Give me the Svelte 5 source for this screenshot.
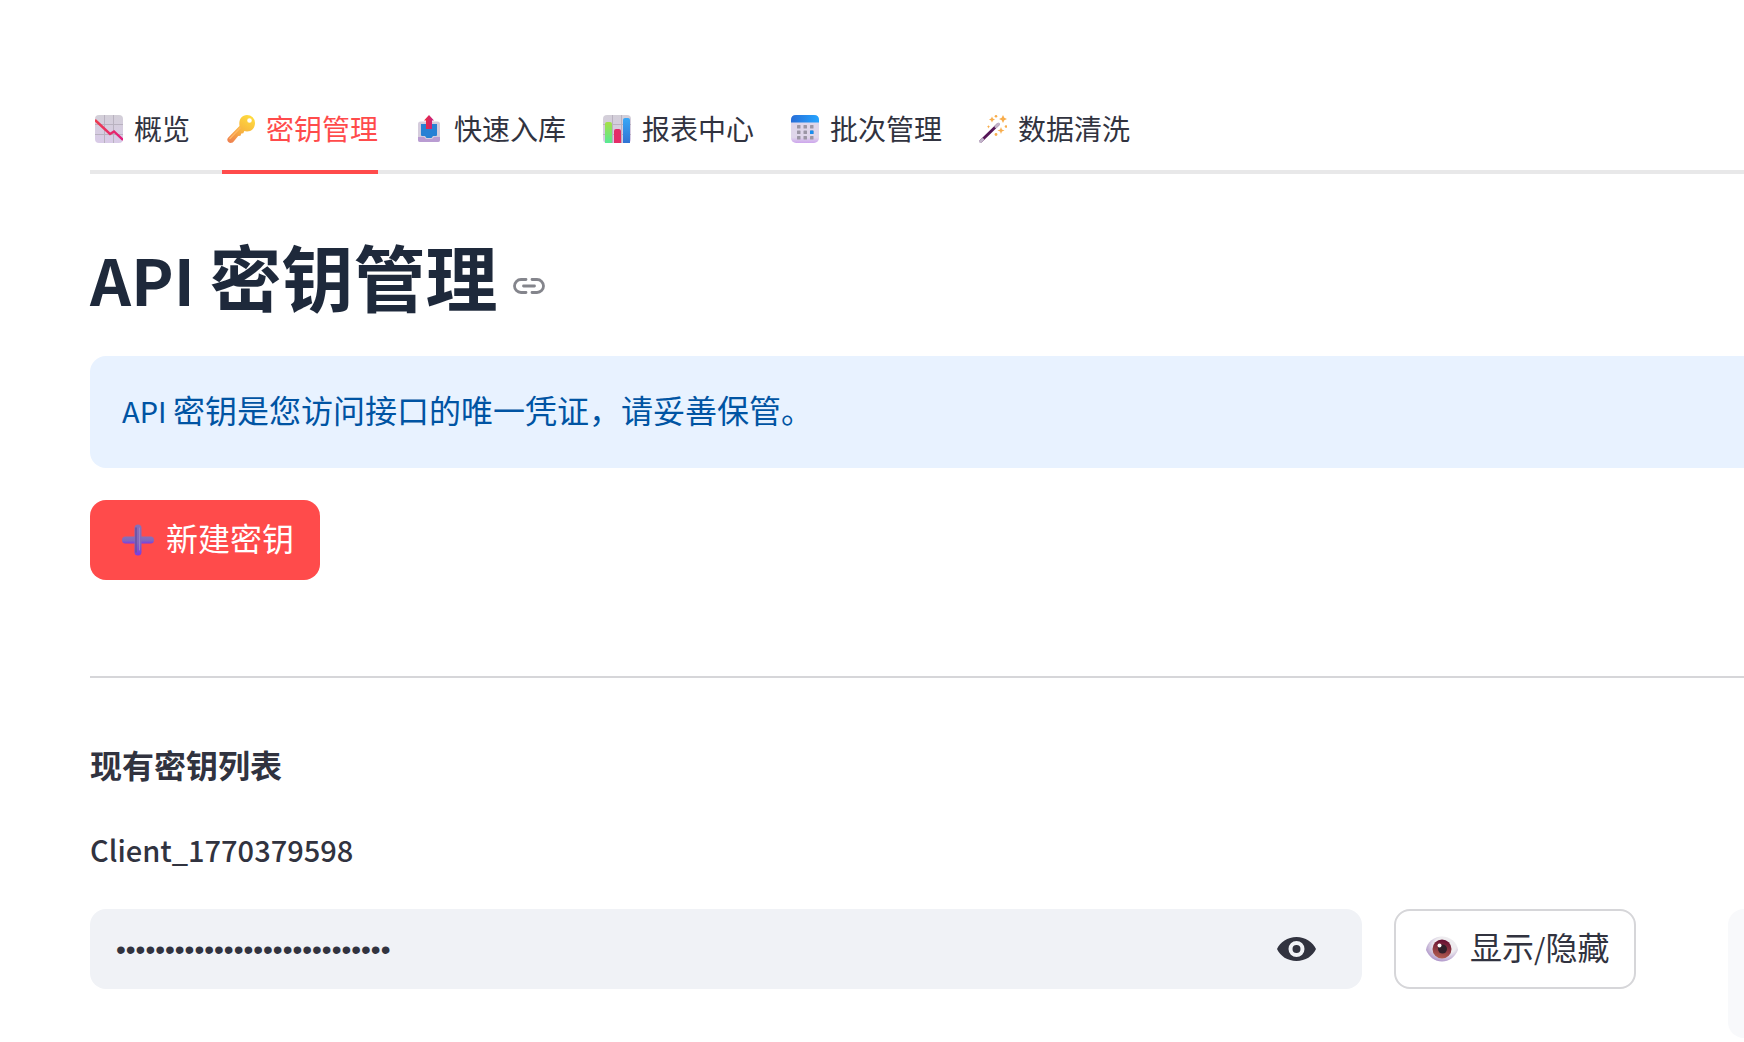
<script lang="ts">
	interface Tab {
		id: string;
		label: string;
	}

	const tabs: Tab[] = [
		{ id: 'overview', label: '概览' },
		{ id: 'keys', label: '密钥管理' },
		{ id: 'import', label: '快速入库' },
		{ id: 'reports', label: '报表中心' },
		{ id: 'batches', label: '批次管理' },
		{ id: 'cleaning', label: '数据清洗' }
	];

	let active = $state('keys');
	let visible = $state(false);
	let apiKey = $state('sk-4f9a2c7be81d4036a5d7c19e0');

	function toggleKey() {
		visible = !visible;
	}
</script>

{#snippet tabIcon(id: string)}
	<svg class="emoji" viewBox="0 0 28 28" aria-hidden="true">
		{#if id === 'overview'}
			<rect width="28" height="28" rx="4" fill="url(#paper)" />
			<path d="M9.5 0v28M18.5 0v28M0 9.5h28M0 19.5h28" stroke="#b9b2c0" stroke-width="1" />
			<path d="M0 5l15 14 4-2.5L28 25" fill="none" stroke="url(#trend)" stroke-width="2.4" />
		{:else if id === 'keys'}
			<path
				fill-rule="evenodd"
				fill="url(#gold)"
				d="M20 0a8 8 0 0 1 8 8c0 5-3.500 8.500-8 8.500-1 0-2-.2-2.700-.5l-1 2.200-2 .3-.8 2.300-2.300.2-4.700 5.800C4.500 29 0 28 .3 24.500c0-.8.400-1.400 1-2L12.500 11C11.500 5 14.500 0 20 0zM22.500 3.200a2.300 2.300 0 1 0 0 4.600 2.300 2.300 0 0 0 0-4.600z"
			/>
			<path d="M13 13L3 23.500" stroke="#ffb765" stroke-width="1.500" stroke-linecap="round" />
		{:else if id === 'import'}
			<rect x="3" y="6.500" width="22" height="20.500" rx="2.500" fill="#d5ccdc" />
			<path d="M3 22h6l2 2h6l2-2h6v3q0 2-2 2H5q-2 0-2-2z" fill="#b99cd2" />
			<path d="M6 9h16v11q0 1-1 1h-3l-1.500 2h-5L10 21H7q-1 0-1-1z" fill="#2781d4" />
			<path d="M14 0l5 5.500h-2V14h-6V5.500H9z" fill="url(#arrow)" />
		{:else if id === 'reports'}
			<rect width="28" height="28" rx="4" fill="url(#paper)" />
			<path d="M9.500 0v28M18.500 0v28M0 9.500h28M0 19.500h28" stroke="#b9b2c0" />
			<path d="M2 28V9q0-2 2-2h3q2 0 2 2v19z" fill="url(#green)" />
			<path d="M11 28V16q0-2 2-2h3q2 0 2 2v12z" fill="#e52d68" />
			<path d="M20 28V5q0-2 2-2h3q2 0 2 2v23z" fill="url(#blue)" />
		{:else if id === 'batches'}
			<rect width="28" height="28" rx="5" fill="url(#calendar)" />
			<path d="M0 7.500V5q0-5 5-5h18q5 0 5 5v2.500z" fill="url(#header)" />
			<g fill="#9c96a5">
				{#each [10, 15.5, 21] as y}
					{#each [6, 12.5, 19] as x}
						<rect {x} {y} width="3.500" height="3.500" rx="0.500" />
					{/each}
				{/each}
			</g>
			<rect x="19" y="15.500" width="3.500" height="3.500" rx="0.500" fill="#178df0" />
		{:else}
			<path d="M2 26L19 9.500" stroke="#551657" stroke-width="3" stroke-linecap="round" />
			<path d="M1.500 26.500l2-2M17 11.500l2.500-2.500" stroke="#c2b4ca" stroke-width="3" stroke-linecap="round" />
			<g fill="#f8ad4c">
				<path d="M24 0l1.300 2.700L28 4l-2.700 1.300L24 8l-1.300-2.700L20 4l2.700-1.300z" />
				<path d="M13 1.500l.9 2.100 2.100.9-2.100.9-.9 2.100-.9-2.100-2.100-.9 2.100-.9z" />
				<path d="M22 12l.9 2.600 2.600.9-2.600.9L22 19l-.9-2.600-2.600-.9 2.600-.9z" />
				<path d="M9.500 10l.5 1.200 1.200.5-1.200.5-.5 1.200-.5-1.200-1.200-.5 1.200-.5z" />
				<circle cx="17" cy="1.300" r="1.300" />
				<circle cx="27" cy="11.500" r="1.300" />
				<circle cx="17" cy="19.500" r="1.400" />
			</g>
		{/if}
	</svg>
{/snippet}

<!-- Gradients shared by the icons -->
<svg class="defs" width="0" height="0" aria-hidden="true">
	<defs>
		<linearGradient id="paper" x1="0" y1="0" x2="0" y2="1">
			<stop offset="0" stop-color="#d3cfd8" />
			<stop offset="1" stop-color="#d9cbe8" />
		</linearGradient>
		<linearGradient id="trend">
			<stop offset="0" stop-color="#ee3d4f" />
			<stop offset="1" stop-color="#e11c7c" />
		</linearGradient>
		<linearGradient id="gold" x1="0.800" y1="0" x2="0.200" y2="1">
			<stop offset="0" stop-color="#ffdc3e" />
			<stop offset="0.500" stop-color="#f8b83f" />
			<stop offset="1" stop-color="#ef8350" />
		</linearGradient>
		<linearGradient id="arrow">
			<stop offset="0" stop-color="#f22d39" />
			<stop offset="1" stop-color="#c12186" />
		</linearGradient>
		<linearGradient id="green" x1="0" y1="0" x2="0" y2="1">
			<stop offset="0" stop-color="#a6df46" />
			<stop offset="1" stop-color="#59e995" />
		</linearGradient>
		<linearGradient id="blue" x1="0" y1="0" x2="0" y2="1">
			<stop offset="0" stop-color="#38a8f7" />
			<stop offset="1" stop-color="#3173d3" />
		</linearGradient>
		<linearGradient id="calendar" x1="0" y1="0" x2="0" y2="1">
			<stop offset="0.800" stop-color="#dfd6ea" />
			<stop offset="1" stop-color="#cda5ed" />
		</linearGradient>
		<linearGradient id="header">
			<stop offset="0" stop-color="#286ed8" />
			<stop offset="1" stop-color="#25a5ff" />
		</linearGradient>
		<linearGradient id="plus" x1="0" y1="0" x2="0" y2="1">
			<stop offset="0" stop-color="#8870b6" />
			<stop offset="0.600" stop-color="#8266bd" />
			<stop offset="1" stop-color="#793be4" />
		</linearGradient>
		<radialGradient id="ball" cx="0.600" cy="0.350" r="0.700">
			<stop offset="0.500" stop-color="#eeecef" />
			<stop offset="1" stop-color="#a78bc5" />
		</radialGradient>
		<linearGradient id="iris" x1="0.600" y1="0" x2="0.400" y2="1">
			<stop offset="0" stop-color="#630c31" />
			<stop offset="1" stop-color="#b35f50" />
		</linearGradient>
	</defs>
</svg>

<main>
	<div class="tabs" role="tablist">
		{#each tabs as tab (tab.id)}
			<button
				type="button"
				role="tab"
				class="tab"
				class:active={active === tab.id}
				aria-selected={active === tab.id}
				onclick={() => (active = tab.id)}
			>
				{@render tabIcon(tab.id)}
				<span>{tab.label}</span>
			</button>
		{/each}
	</div>

	<h1 id="api-keys">
		<span><span class="latin">{'API '}</span>密钥管理</span>
		<a class="anchor" href="#api-keys" aria-label="API 密钥管理">
			<svg viewBox="0 0 32 16" aria-hidden="true">
				<path
					d="M13 1.500H8a6.500 6.500 0 0 0 0 13h5M19 1.500h5a6.500 6.500 0 0 1 0 13h-5M10.500 8h11"
					fill="none"
					stroke="currentColor"
					stroke-width="2.800"
					stroke-linecap="round"
				/>
			</svg>
		</a>
	</h1>

	<p class="info"><span class="latin">{'API '}</span>密钥是您访问接口的唯一凭证，请妥善保管。</p>

	<button type="button" class="button primary">
		<svg class="emoji" viewBox="0 0 32 32" aria-hidden="true">
			<rect y="12.500" width="32" height="7" rx="3.500" fill="url(#plus)" />
			<rect x="12.500" y="0.500" width="7" height="31" rx="3.500" fill="url(#plus)" />
			<path d="M14 4v24" stroke="#6650a2" stroke-width="1.500" stroke-linecap="round" />
			<path d="M17.500 4v22" stroke="#9883c2" stroke-linecap="round" />
		</svg>
		<span class="caption">新建密钥</span>
	</button>

	<hr />

	<h2>现有密钥列表</h2>
	<label class="client" for="client-key">Client_1770379598</label>

	<div class="key-row">
		<div class="field">
			<input id="client-key" type={visible ? 'text' : 'password'} bind:value={apiKey} />
			<button type="button" class="reveal" aria-label="显示/隐藏" onclick={toggleKey}>
				<svg viewBox="0 0 39 24" aria-hidden="true">
					<path
						fill="currentColor"
						fill-rule="evenodd"
						d="M19.500 0C10.600 0 3.100 5 0 12c3.100 7 10.600 12 19.500 12S35.900 19 39 12C35.900 5 28.400 0 19.500 0zm0 20a8 8 0 1 1 0-16 8 8 0 0 1 0 16zm0-12a4 4 0 1 0 0 8 4 4 0 0 0 0-8z"
					/>
				</svg>
			</button>
		</div>
		<div>
			<button type="button" class="button secondary" onclick={toggleKey}>
				<svg class="emoji" viewBox="0 0 32 32" aria-hidden="true">
					<path
						d="M0 17C1 9 8 3.500 16 3.500S31 9 32 17c-3 7-9 11.500-16 11.500S3 24 0 17z"
						fill="url(#ball)"
					/>
					<circle cx="16" cy="16" r="9.500" fill="url(#iris)" />
					<circle cx="16.500" cy="16" r="4.500" fill="#30202a" />
					<circle cx="13.500" cy="12.500" r="2" fill="#fff" />
				</svg>
				<span class="caption">显示<span class="latin">/</span>隐藏</span>
			</button>
		</div>
		<div class="code"></div>
	</div>
</main>

<style>
	:global(body) {
		margin: 0;
		background: #fff;
	}

	.defs {
		position: absolute;
	}

	main {
		padding: 88px 0 0 90px;
		font-family: 'Noto Sans CJK SC', sans-serif;
		font-size: 32px;
		line-height: 48px;
		color: #31333f;
		overflow: hidden;
	}

	button,
	input {
		font: inherit;
		color: inherit;
		border: 0;
		margin: 0;
		background: none;
	}

	button {
		cursor: pointer;
	}

	/* Latin letters are drawn a step smaller than the Chinese ones */
	.latin {
		font-size: 29px;
		line-height: 1;
	}

	.tabs {
		display: flex;
		gap: 32px;
		box-shadow: inset 0 -4px #e8e8e9;
	}

	.tab {
		display: flex;
		align-items: center;
		gap: 11px;
		height: 86px;
		padding: 0 0 0 5px;
		border-bottom: 4px solid transparent;
		font-size: 28px;
		white-space: nowrap;
	}

	.tab span {
		padding-bottom: 2px;
	}

	.tab.active {
		color: #ff4b4b;
		border-color: #ff4b4b;
	}

	.emoji {
		flex: none;
		width: 28px;
		height: 28px;
	}

	h1 {
		display: flex;
		align-items: center;
		gap: 16px;
		margin: 58px 0 38px;
		font-size: 72px;
		line-height: 86px;
		font-weight: 700;
		color: #1e293b;
	}

	h1 .latin {
		font-size: 64px;
	}

	.anchor {
		display: flex;
		padding-top: 22px;
		color: #84858c;
	}

	.anchor svg {
		width: 32px;
		height: 16px;
	}

	.info {
		margin: 0 0 32px;
		padding: 29px 32px 35px;
		border-radius: 16px 0 0 16px;
		background: #e8f2ff;
		color: #0054a3;
	}

	.button {
		display: flex;
		align-items: center;
		justify-content: center;
		gap: 12px;
		box-sizing: border-box;
		height: 80px;
		border-radius: 16px;
		white-space: nowrap;
	}

	.button .emoji {
		width: 32px;
		height: 32px;
	}

	.caption {
		padding-bottom: 6px;
	}

	.primary {
		padding: 0 26px 0 32px;
		background: #ff4b4b;
		color: #fff;
	}

	.secondary {
		padding: 0 25px 0 30px;
		border: 2px solid #d6d6d9;
		background: #fff;
	}

	hr {
		margin: 96px 0 62px;
		border: 0;
		border-top: 2px solid #d6d6d9;
	}

	h2 {
		margin: 0 0 37px;
		font-size: 32px;
		font-weight: 700;
	}

	.client {
		display: block;
		margin-bottom: 36px;
		font-size: 29px;
		font-weight: 500;
	}

	.key-row {
		display: grid;
		grid-template-columns: minmax(0, 1fr) 302px 16px;
		gap: 32px;
	}

	.field {
		display: flex;
		height: 80px;
		border-radius: 16px;
		background: #f0f2f6;
		overflow: hidden;
	}

	input {
		flex: 1;
		min-width: 0;
		padding: 2px 0 0 26px;
		font-family: 'Liberation Sans', sans-serif;
		font-size: 28px;
		outline: none;
	}

	.reveal {
		display: flex;
		align-items: center;
		padding: 0 46px;
	}

	.reveal svg {
		width: 39px;
		height: 24px;
	}

	.code {
		height: 129px;
		border-radius: 16px 0 0 16px;
		background: #f8f9fb;
	}
</style>
